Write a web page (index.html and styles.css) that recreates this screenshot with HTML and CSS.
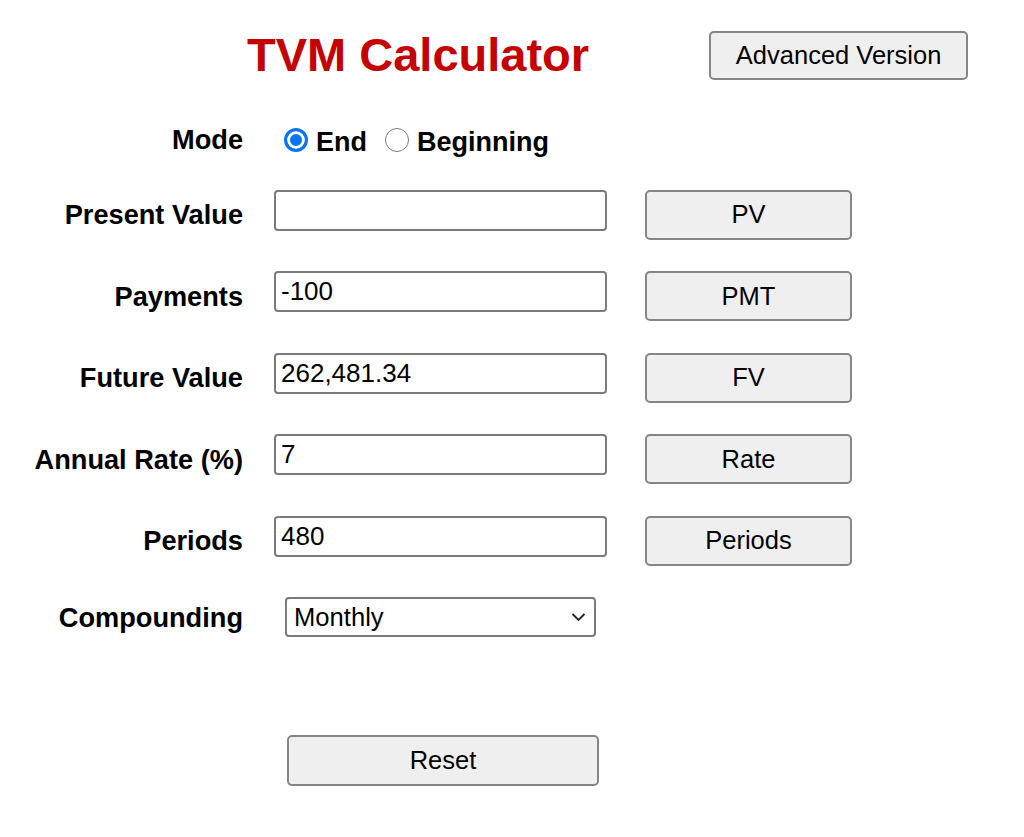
FILE: index.html
```html
<!DOCTYPE html>
<html lang="en">
<head>
    <meta charset="UTF-8">
    <meta name="viewport" content="width=device-width, initial-scale=1.0">
    <title>TVM Calculator</title>
    <link rel="stylesheet" href="styles.css">
</head>
<body>
    <header class="top">
        <h1 class="title">TVM Calculator</h1>
        <button type="button" class="btn btn-advanced">Advanced Version</button>
    </header>

    <form class="calc" id="tvmForm">
        <label class="label">Mode</label>
        <div class="mode">
            <label class="choice"><input type="radio" name="mode" value="end" checked><span>End</span></label>
            <label class="choice"><input type="radio" name="mode" value="begin"><span>Beginning</span></label>
        </div>

        <label class="label" for="pv">Present Value</label>
        <input type="text" class="field" id="pv" value="">
        <button type="button" class="btn btn-solve">PV</button>

        <label class="label" for="pmt">Payments</label>
        <input type="text" class="field" id="pmt" value="-100">
        <button type="button" class="btn btn-solve">PMT</button>

        <label class="label" for="fv">Future Value</label>
        <input type="text" class="field" id="fv" value="262,481.34">
        <button type="button" class="btn btn-solve">FV</button>

        <label class="label" for="rate">Annual Rate (%)</label>
        <input type="text" class="field" id="rate" value="7">
        <button type="button" class="btn btn-solve">Rate</button>

        <label class="label" for="periods">Periods</label>
        <input type="text" class="field" id="periods" value="480">
        <button type="button" class="btn btn-solve">Periods</button>

        <label class="label" for="compounding">Compounding</label>
        <div class="select-wrap">
            <select id="compounding" class="select">
                <option>Annually</option>
                <option>Semi-Annually</option>
                <option>Quarterly</option>
                <option selected>Monthly</option>
                <option>Daily</option>
            </select>
            <svg class="chevron" width="15" height="10" viewBox="0 0 15 10">
                <path d="M1.5 2 L7.5 8 L13.5 2" fill="none" stroke="#222" stroke-width="1.8"/>
            </svg>
        </div>

        <button type="reset" class="btn btn-reset">Reset</button>
    </form>
</body>
</html>
```

FILE: styles.css
```css
body {
    margin: 0;
    font-family: "Liberation Sans", Arial, sans-serif;
    color: #000;
    background: #fff;
}
.top {
    display: flex;
    align-items: center;
    padding: 28px 0 0 247px;
}
.title {
    margin: 0;
    font-size: 47px;
    line-height: 54px;
    font-weight: bold;
    color: #c40000;
}
.btn {
    font-family: "Liberation Sans", Arial, sans-serif;
    font-size: 25.5px;
    color: #000;
    background: #efefef;
    border: 2px solid #858585;
    border-radius: 5px;
    padding: 0;
    cursor: pointer;
}
.btn:hover {
    background: #e5e5e5;
}
.btn-advanced {
    width: 259px;
    height: 49px;
    margin-left: 120px;
}
.calc {
    display: grid;
    grid-template-columns: 243px 333px 214px;
    grid-template-rows: 37px repeat(5, 50px) 40px 117px;
    column-gap: 31px;
    row-gap: 31.5px;
    align-items: center;
    margin-top: 39px;
}
.label {
    justify-self: end;
    font-size: 27.2px;
    line-height: 31px;
    font-weight: bold;
}
.mode {
    grid-column: 2 / 4;
    display: flex;
    align-items: center;
    margin-left: 10px;
}
.choice {
    display: flex;
    align-items: center;
    gap: 8px;
    margin-right: 18px;
    font-size: 27px;
    line-height: 31px;
    font-weight: bold;
}
.choice span {
    padding-top: 5px;
}
.choice input {
    appearance: none;
    width: 24px;
    height: 24px;
    margin: 0;
    border: 1.5px solid #7a7a7a;
    border-radius: 50%;
    background: #fff;
}
.choice input:checked {
    border: 3px solid #0a74f5;
    background: #0a74f5;
    box-shadow: inset 0 0 0 3px #fff;
}
.field {
    align-self: start;
    box-sizing: border-box;
    width: 333px;
    height: 41px;
    margin: 0;
    padding: 0 5px;
    border: 2px solid #7b7b7b;
    border-radius: 4px;
    font-family: "Liberation Sans", Arial, sans-serif;
    font-size: 26px;
    color: #000;
}
.btn-solve {
    justify-self: end;
    width: 207px;
    height: 50px;
}
.select-wrap {
    grid-column: 2 / 4;
    position: relative;
    width: 311px;
    height: 40px;
    margin-left: 11px;
}
.select {
    appearance: none;
    box-sizing: border-box;
    width: 100%;
    height: 40px;
    margin: 0;
    padding: 0 30px 0 7px;
    border: 2px solid #7b7b7b;
    border-radius: 4px;
    background: #fff;
    font-family: "Liberation Sans", Arial, sans-serif;
    font-size: 25.6px;
    color: #000;
}
.chevron {
    position: absolute;
    right: 10px;
    top: 15px;
    pointer-events: none;
}
.btn-reset {
    grid-column: 2 / 4;
    align-self: end;
    width: 312px;
    height: 51px;
    margin-left: 13px;
}
```
